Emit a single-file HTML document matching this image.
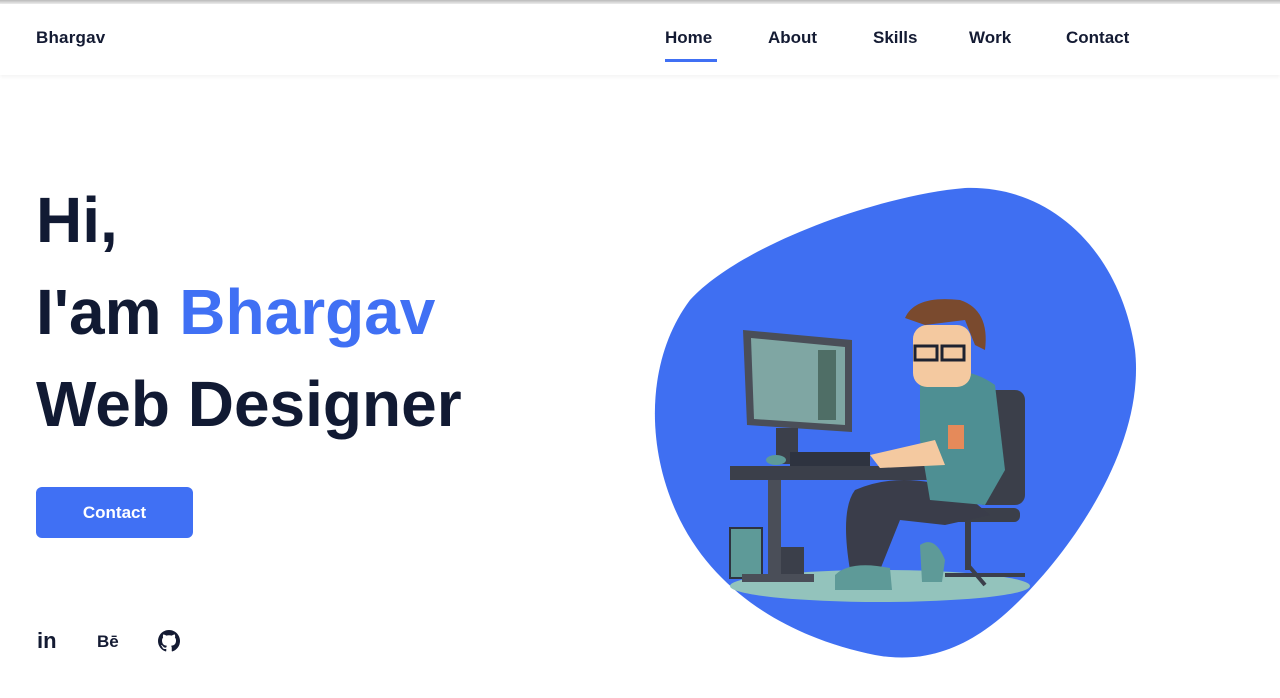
<!DOCTYPE html>
<html><head><meta charset="utf-8"><style>
*{margin:0;padding:0;box-sizing:border-box}
html,body{width:1280px;height:698px;overflow:hidden;background:#fff;font-family:"Liberation Sans",Arial,sans-serif;color:#141b33}
.topbar{position:absolute;top:0;left:0;width:1280px;height:4px;background:linear-gradient(#b9b9b9,#eee)}
header{position:absolute;top:4px;left:0;width:1280px;height:71px;background:#fff;box-shadow:0 2px 4px rgba(0,0,0,.05)}
.logo{position:absolute;left:36px;top:24px;font-size:17px;font-weight:bold;letter-spacing:.2px}
nav a{position:absolute;top:24px;font-size:17px;font-weight:bold;color:#141b33;text-decoration:none}
.ul{position:absolute;left:665px;top:59px;width:52px;height:3px;background:#4070f4}
h1{position:absolute;left:36px;top:174px;font-size:64px;line-height:92px;font-weight:bold;color:#111a33}
h1 span{color:#4070f4}
.btn{position:absolute;left:36px;top:487px;width:157px;height:51px;border-radius:6px;background:#4070f4;color:#fff;font-weight:bold;font-size:17px;text-align:center;line-height:51px}
.soc{position:absolute;top:630px;font-weight:bold;color:#141b33}
</style></head><body>
<div class="topbar"></div>
<header>
<div class="logo">Bhargav</div>
<nav>
<a style="left:665px">Home</a>
<a style="left:768px">About</a>
<a style="left:873px">Skills</a>
<a style="left:969px">Work</a>
<a style="left:1066px">Contact</a>
</nav>
</header>
<div class="ul"></div>
<h1>Hi,<br>I'am <span>Bhargav</span><br>Web Designer</h1>
<div class="btn">Contact</div>
<div class="soc" style="left:37px;font-size:22px;top:628px">in</div>
<div class="soc" style="left:97px;font-size:17px;top:632px">Bē</div>
<svg style="position:absolute;left:158px;top:630px" width="22" height="22" viewBox="0 0 16 16"><path fill="#141b33" d="M8 0C3.58 0 0 3.58 0 8c0 3.54 2.290 6.53 5.47 7.59.4.07.55-.17.55-.38 0-.19-.01-.82-.01-1.49-2.01.37-2.530-.49-2.69-.94-.09-.23-.48-.94-.82-1.130-.28-.15-.68-.52-.01-.53.63-.01 1.080.58 1.230.82.72 1.210 1.870.87 2.330.66.07-.52.28-.87.51-1.07-1.78-.2-3.64-.89-3.64-3.95 0-.87.31-1.59.82-2.15-.08-.2-.36-1.02.08-2.12 0 0 .67-.21 2.2.82.64-.18 1.32-.27 2-.27.68 0 1.36.09 2 .27 1.53-1.04 2.2-.82 2.2-.82.44 1.1.16 1.92.08 2.12.51.56.82 1.27.82 2.15 0 3.07-1.87 3.75-3.65 3.95.29.25.54.73.54 1.48 0 1.07-.01 1.93-.01 2.2 0 .21.15.46.55.38A8.013 8.013 0 0016 8c0-4.42-3.58-8-8-8z"/></svg>
<svg style="position:absolute;left:0;top:0" width="1280" height="698">
<path fill="#3f6ff2" d="M965 188C1050 185 1120 250 1135 350C1145 440 1080 540 1020 600C975 645 930 665 875 655C800 640 720 600 680 520C645 450 645 360 690 300C740 245 880 195 965 188Z"/>
<ellipse cx="880" cy="586" rx="150" ry="16" fill="#93c3bc"/>
<rect x="730" y="528" width="32" height="50" fill="#5e9a98" stroke="#2e3340" stroke-width="2"/>
<rect x="780" y="547" width="24" height="30" fill="#3b3f4a"/>
<rect x="742" y="574" width="72" height="8" fill="#4a4e58"/>
<rect x="768" y="478" width="13" height="98" fill="#4a4e58"/>
<polygon points="743,330 852,340 852,432 747,425" fill="#4a4e58"/>
<polygon points="751,338 845,347 845,425 754,419" fill="#7fa6a3"/>
<rect x="818" y="350" width="18" height="70" fill="#4f6e66"/>
<rect x="776" y="428" width="22" height="36" fill="#3b3f4a"/>
<rect x="730" y="466" width="198" height="14" fill="#3b3f4a"/>
<rect x="790" y="452" width="80" height="14" fill="#2e3340"/>
<ellipse cx="776" cy="460" rx="10" ry="5" fill="#5e9a98"/>
<rect x="975" y="390" width="50" height="115" rx="10" fill="#3b3f4a"/>
<rect x="915" y="508" width="105" height="14" rx="6" fill="#3b3f4a"/>
<rect x="965" y="520" width="6" height="50" fill="#3b3f4a"/>
<path d="M945 575L1025 575M968 565L985 585" stroke="#3b3f4a" stroke-width="4"/>
<path d="M855 490Q900 470 960 490L990 515L945 525L900 520L880 570L850 570Q840 510 855 490Z" fill="#3a3d4a"/>
<path d="M920 380Q960 360 995 385L1005 470L985 505L930 500L920 440Z" fill="#4e8f93"/>
<rect x="948" y="425" width="16" height="24" fill="#e58a5a"/>
<path d="M870 455L935 440L945 465L880 468Z" fill="#f4c9a0"/>
<rect x="913" y="325" width="58" height="62" rx="14" fill="#f4c9a0"/>
<path d="M905 318Q915 295 960 300Q990 310 985 350L975 345L965 320L925 325Z" fill="#7a4a2e"/>
<rect x="915" y="346" width="22" height="14" fill="none" stroke="#1e2230" stroke-width="3"/>
<rect x="942" y="346" width="22" height="14" fill="none" stroke="#1e2230" stroke-width="3"/>
<path d="M835 575Q850 560 890 568L892 590L835 590Z" fill="#5e9a98"/>
<path d="M920 545Q935 535 945 560L942 582L922 582Z" fill="#5e9a98"/>
</svg>
</body></html>
